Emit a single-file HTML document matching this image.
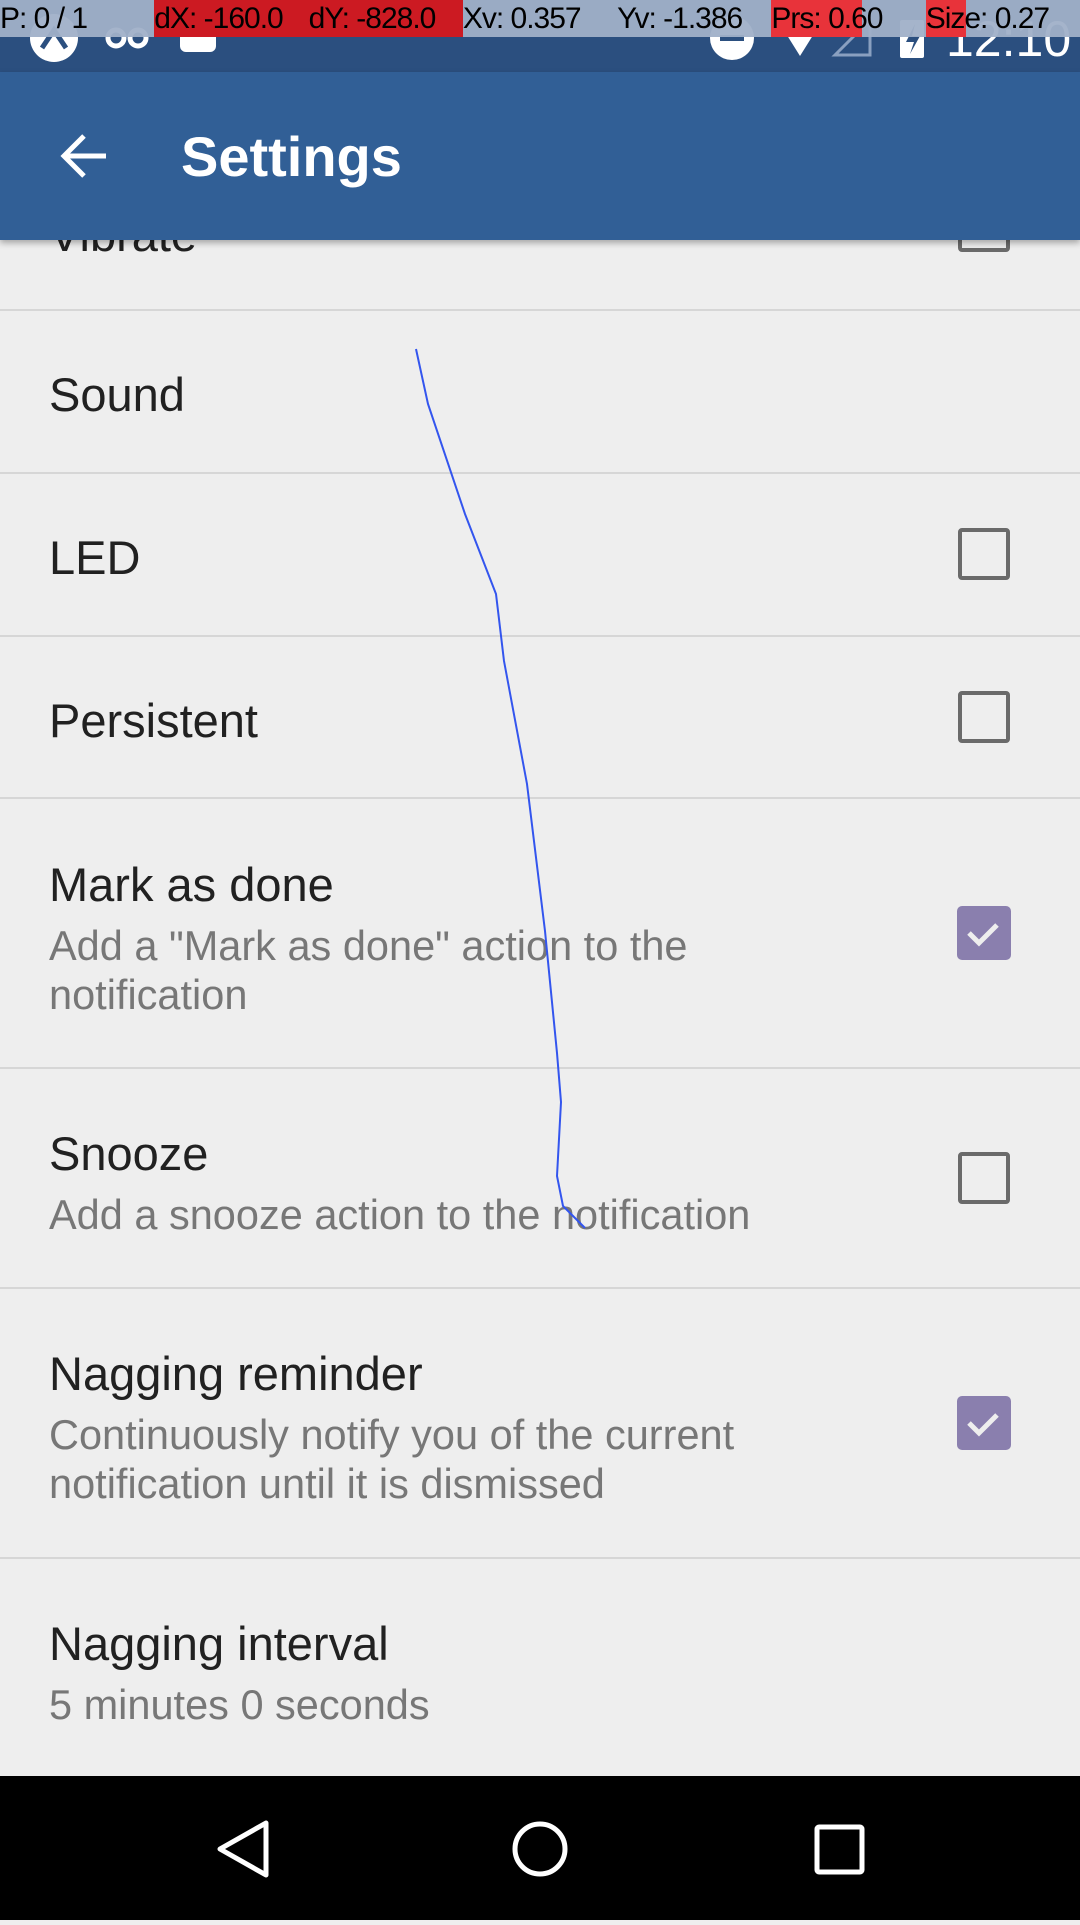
<!DOCTYPE html>
<html><head><meta charset="utf-8"><style>
*{margin:0;padding:0;box-sizing:border-box}
body{width:1080px;height:1920px;overflow:hidden;background:#eeeeee;font-family:"Liberation Sans",sans-serif;position:relative}
.abs{position:absolute}
.sb{left:0;top:0;width:1080px;height:72px;background:#2b4f7f}
.tb{left:0;top:72px;width:1080px;height:168px;background:#315f96;box-shadow:0 3px 6px rgba(0,0,0,.3);z-index:5}
.tb .t{position:absolute;left:181px;top:55px;color:#fff;font-size:56px;font-weight:bold;line-height:60px}
.dbg{left:0;top:0;width:1080px;height:37px;z-index:10;display:flex}
.dbg div{width:154.3px;height:37px;background:rgba(160,176,200,.95);font-size:30px;line-height:37px;color:#000;white-space:nowrap;overflow:visible;position:relative;letter-spacing:-1px}
.div{left:0;width:1080px;height:2px;background:#d6d6d6}
.ti{left:49px;font-size:47px;color:#212121;line-height:50px}
.su{left:49px;font-size:41.5px;color:#777;line-height:49px}
.cb{left:958px;width:52px;height:52px;border:4px solid #6a6a6a;border-radius:4px}
.cc{left:957px;width:54px;height:54px;background:#8a7fae;border-radius:5px}
.nav{left:0;top:1776px;width:1080px;height:144px;background:#000}
</style></head><body>
<div class="abs sb"></div>
<svg class="abs" style="left:0;top:0;z-index:9" width="1080" height="72">
<circle cx="54" cy="38" r="24" fill="#fff"/>
<path d="M42 48 L54 30 L66 48" stroke="#2b4f7f" stroke-width="5" fill="none"/>
<circle cx="116" cy="38" r="8" stroke="#fff" stroke-width="5" fill="none"/><circle cx="138" cy="38" r="8" stroke="#fff" stroke-width="5" fill="none"/>
<rect x="180" y="22" width="36" height="30" rx="6" fill="#fff"/>
<circle cx="732" cy="38" r="22" fill="#fff"/><rect x="720" y="35" width="24" height="6" fill="#2b4f7f"/>
<path d="M780 24 L820 24 L800 56Z" fill="#fff"/>
<path d="M835 55 L870 20 L870 55Z" stroke="#8aa0c0" stroke-width="3" fill="none"/>
<rect x="900" y="20" width="24" height="38" rx="2" fill="#fff"/><path d="M915 24 L906 42 L914 42 L910 54 L920 36 L912 36Z" fill="#2b4f7f"/>
<text x="946" y="56" fill="#fff" font-size="50" font-family="Liberation Sans">12:10</text>
</svg>
<div class="abs dbg">
<div>P: 0 / 1</div>
<div style="background:#cc1a22">dX: -160.0</div>
<div style="background:#cc1a22">dY: -828.0</div>
<div>Xv: 0.357</div>
<div>Yv: -1.386</div>
<div style="background:linear-gradient(90deg,#e8333a 0,#e8333a 91px,rgba(160,176,200,.95) 91px)">Prs: 0.60</div>
<div style="background:linear-gradient(90deg,#e8333a 0,#e8333a 40px,rgba(160,176,200,.95) 40px)">Size: 0.27</div>
</div>
<div class="abs tb">
<svg class="abs" style="left:58px;top:60px" width="52" height="48"><path d="M48 24 H6 M26 4 L6 24 L26 44" stroke="#fff" stroke-width="5" fill="none"/></svg>
<div class="t">Settings</div>
</div>
<div class="abs ti" style="top:210px">Vibrate</div>
<div class="abs cb" style="top:200px"></div>
<div class="abs div" style="top:309px"></div>
<div class="abs ti" style="top:370px">Sound</div>
<div class="abs div" style="top:472px"></div>
<div class="abs ti" style="top:533px">LED</div>
<div class="abs cb" style="top:528px"></div>
<div class="abs div" style="top:635px"></div>
<div class="abs ti" style="top:696px">Persistent</div>
<div class="abs cb" style="top:691px"></div>
<div class="abs div" style="top:797px"></div>
<div class="abs ti" style="top:860px">Mark as done</div>
<div class="abs su" style="top:921px">Add a "Mark as done" action to the<br>notification</div>
<div class="abs cc" style="top:906px"><svg width="54" height="54"><path d="M12 27 L22 37 L40 19" stroke="#eee" stroke-width="5" fill="none"/></svg></div>
<div class="abs div" style="top:1067px"></div>
<div class="abs ti" style="top:1129px">Snooze</div>
<div class="abs su" style="top:1190px">Add a snooze action to the notification</div>
<div class="abs cb" style="top:1152px"></div>
<div class="abs div" style="top:1287px"></div>
<div class="abs ti" style="top:1349px">Nagging reminder</div>
<div class="abs su" style="top:1410px">Continuously notify you of the current<br>notification until it is dismissed</div>
<div class="abs cc" style="top:1396px"><svg width="54" height="54"><path d="M12 27 L22 37 L40 19" stroke="#eee" stroke-width="5" fill="none"/></svg></div>
<div class="abs div" style="top:1557px"></div>
<div class="abs ti" style="top:1619px">Nagging interval</div>
<div class="abs su" style="top:1680px">5 minutes 0 seconds</div>
<svg class="abs" style="left:0;top:0;z-index:4" width="1080" height="1776">
<polyline points="416,349 428,404 465,514 496,594 504,661 527,784 545,931 557,1053 561,1102 557,1176 563,1206 585,1228" stroke="#3355ee" stroke-width="2" fill="none"/>
</svg>
<div class="abs nav">
<svg width="1080" height="144">
<path d="M266 47 L220 73 L266 99Z" stroke="#fff" stroke-width="5" fill="none" stroke-linejoin="round"/>
<circle cx="540" cy="73" r="25" stroke="#fff" stroke-width="5" fill="none"/>
<rect x="817" y="51" width="45" height="45" rx="2" stroke="#fff" stroke-width="5" fill="none"/>
</svg>
</div>
</body></html>
